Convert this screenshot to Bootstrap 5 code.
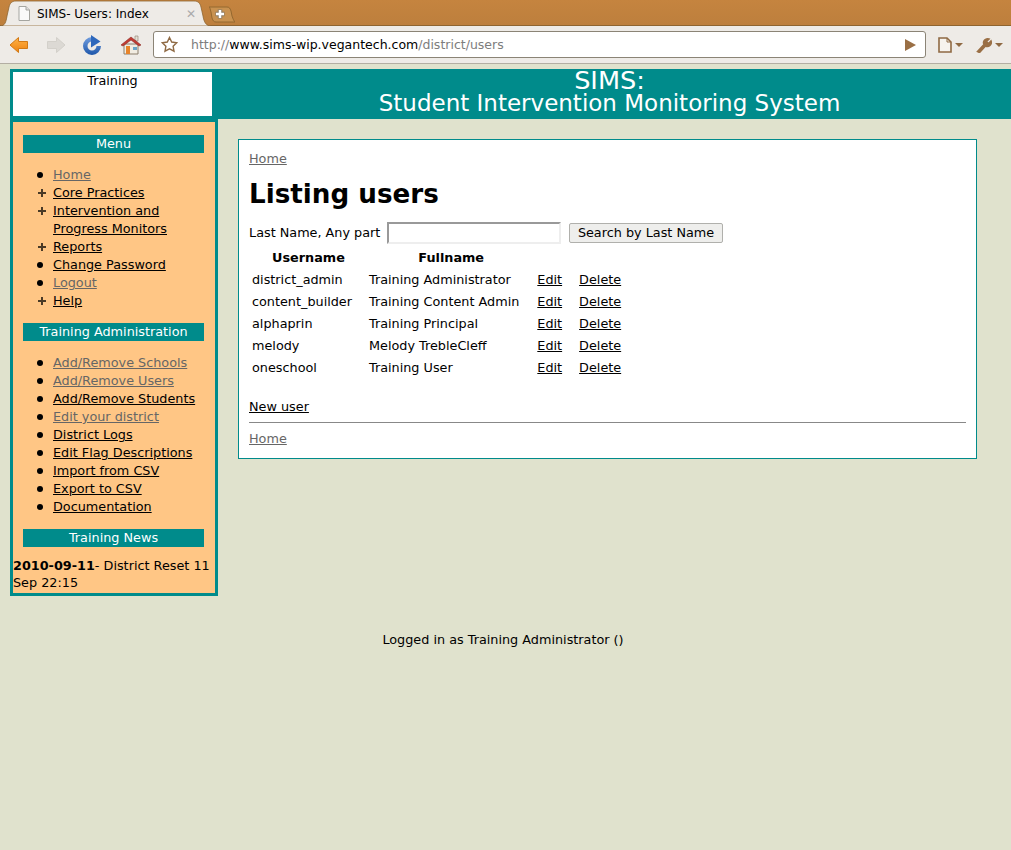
<!DOCTYPE html>
<html lang="en">
<head>
  <meta charset="UTF-8">
  <title>SIMS- Users: Index</title>
  <link href="https://cdn.jsdelivr.net/npm/bootstrap@5.3.0/dist/css/bootstrap.min.css" rel="stylesheet">
  <style>
    body { background-color: #e0e2cd; color: #000; font-family: "DejaVu Sans", sans-serif; font-size: 12.8px; line-height: 18px; }
    a { color: #000; }
    a.seen { color: #666; }

    /* browser chrome */
    .tabstrip { height: 26px; background: linear-gradient(#c5843f, #bd7f3d); border-bottom: 1px solid #8e6430; }
    .tabshape { position: relative; width: 212px; height: 26px; font-size: 12px; padding: 1px 16px 0 18px; }
    .tabshape > svg.tabbg { position: absolute; left: 0; top: 0; }
    .tabshape > svg, .tabshape > span { position: relative; }
    .tabicon { margin-right: 7px; }
    .tabx { color: #aaa; font-size: 12px; }
    .newtab { position: relative; width: 28px; height: 18px; margin: 6px 0 0 -5px; }
    .newtab svg { display: block; }
    .toolbar { height: 38px; background: #eeebe7; border-bottom: 1px solid #b3aea3; padding-left: 9px; }
    .btnslot { width: 37px; flex: none; }
    .homeslot { width: 33px; }
    .urlbar { width: 773px; flex: none; height: 27px; background: #fff; border: 1px solid #8b8476; border-radius: 3px; padding: 0 9px 0 7px; font-size: 12.5px; color: #7d7d7d; }
    .urlbar b { font-weight: normal; color: #000; }
    .urltext { margin-left: 13px; }
    .drop { width: 0; height: 0; border-left: 4px solid transparent; border-right: 4px solid transparent; border-top: 4px solid #8f6a44; }
    .menuicons { margin-left: 12px; }
    .pagedrop { margin: 0 13px 0 3px; }
    .wrenchdrop { margin-left: 3px; }

    /* page */
    .pagewrap { padding: 5px 0 0 10px; }
    .headbar { background: #008b8b; height: 50px; padding: 3px 0 3px 3px; color: #fff; }
    .logobox { width: 199px; height: 44px; background: #fff; color: #000; text-align: center; line-height: 17px; }
    .sitename { font-size: 23px; line-height: 24px; margin: -5px 4px 0 0; }
    .sitename span { display: block; }
    .sitename .toptitle { font-size: 25.6px; line-height: 22px; margin-top: 2px; }
    .sidepane { width: 208px; height: 477px; border: 3px solid #008b8b; background: #ffc685; flex: none; padding-top: 13px; }
    .sidehead { background: #008b8b; color: #fff; text-align: center; margin: 0 11px 0 10px; height: 18px; line-height: 18px; }
    .sidelist { margin: 13px 0 13px; padding-left: 40px; list-style: none; }
    .sidelist li { position: relative; }
    .sidelist li::before { content: ""; position: absolute; left: -16px; top: 6px; width: 6px; height: 6px; border-radius: 50%; background: #000; }
    .sidelist li.more::before { left: -15px; top: 5px; width: 8px; height: 8px; border-radius: 0; background: linear-gradient(#4a3a26, #4a3a26) center / 8px 2px no-repeat, linear-gradient(#4a3a26, #4a3a26) center / 2px 8px no-repeat; }
    .newsline { margin: 10px 0 0; line-height: 17px; }
    .mainbox { width: 739px; height: 320px; background: #fff; border: 1px solid #008b8b; margin: 20px 0 0 20px; padding: 10px; }
    .mainbox h1 { font-size: 26.2px; font-weight: bold; line-height: 30px; margin: 11px 0 12px; }
    .searchrow { height: 24px; }
    .searchbox { width: 174px; height: 22px; border: 2px solid #eee; border-top-color: #999; border-left-color: #999; margin: 0 8px 0 7px; padding: 0 2px; }
    .searchbtn { height: 20px; padding: 0 7.5px 1px; background: #eeeeec; border: 1px solid #b0b0ac; border-radius: 2px; font-size: 12.8px; line-height: 16px; color: #000; }
    .usertbl { border-collapse: separate; border-spacing: 2px; margin-top: 1px; }
    .usertbl th { text-align: center; padding: 1px; }
    .usertbl td { padding: 1px 14px 1px 1px; height: 20px; }
    .usertbl td:nth-child(2) { padding-right: 15px; }
    .newlink { margin: 18px 0 6px; }
    .mainbox hr { margin: 0 0 7px; border: 0; border-top: 1px solid #888; opacity: 1; }
    .footline { text-align: center; margin-top: 35px; width: 986px; }
  </style>
</head>
<body>
  <div class="tabstrip d-flex">
    <div class="tabshape d-flex align-items-center">
      <svg class="tabbg" width="212" height="26" viewBox="0 0 212 26"><path d="M0 26c5 0 6-4 7-10l2-9c1-4 3-6 7-6h178c4 0 6 2 7 6l2 9c1 6 3 10 8 10z" fill="#eeebe7" stroke="#8e6430" stroke-width=".8"/></svg>
      <svg class="tabicon" width="12" height="15" viewBox="0 0 12 15"><path d="M1 .5h7l3.500 3.500v10.500h-10.500z" fill="#fafafa" stroke="#a5a5a0"/><path d="M8 .5v3.500h3.500" fill="#ddd" stroke="#a5a5a0"/></svg>
      <span class="flex-grow-1">SIMS- Users: Index</span>
      <span class="tabx">✕</span>
    </div>
    <div class="newtab">
      <svg width="28" height="18" viewBox="0 0 28 18"><path d="M2 1h18c2 0 3 1 4 4l1 5c1 3 2 5 3 6h-19c-2 0-3-1-4-4l-1-6c-1-3-1-5-2-5z" fill="#c99250" stroke="#94682f" stroke-width="1"/><path d="M13 3.500v9M8.500 8h9" stroke="#8a7a62" stroke-width="4.500"/><path d="M13 4v8M9 8h8" stroke="#fff" stroke-width="2.500"/></svg>
    </div>
  </div>
  <div class="toolbar d-flex align-items-center">
    <div class="btnslot">
      <svg width="20" height="18" viewBox="0 0 20 18"><defs><linearGradient id="backfill" x1="0" y1="0" x2="0" y2="1"><stop offset="0" stop-color="#ffb347"/><stop offset="1" stop-color="#ee8210"/></linearGradient></defs><path d="M1 9l8.500-7.500v4h9v7h-9v4z" fill="url(#backfill)" stroke="#d27a16"/></svg>
    </div>
    <div class="btnslot">
      <svg width="20" height="18" viewBox="0 0 20 18"><path d="M19 9l-8.500-7.500v4h-9v7h9v4z" fill="#dcd9d4" stroke="#d3d0ca"/></svg>
    </div>
    <div class="btnslot">
      <svg width="18" height="20" viewBox="0 0 18 20"><defs><linearGradient id="reloadfill" gradientUnits="userSpaceOnUse" x1="0" y1="0" x2="0" y2="20"><stop offset="0" stop-color="#7aa5e4"/><stop offset="1" stop-color="#1d56aa"/></linearGradient></defs><path d="M9 4.250A6.750 6.750 0 1 0 15.750 11" fill="none" stroke="url(#reloadfill)" stroke-width="4.500"/><path d="M8 0l9.500 6.500-9.500 6z" fill="#2e68bc"/></svg>
    </div>
    <div class="btnslot homeslot">
      <svg width="22" height="22" viewBox="0 0 22 22"><path d="M4 10h14v10h-14z" fill="#f1ece2" stroke="#8a7e6c"/><path d="M15 2h3v5h-3z" fill="#e4dfd4" stroke="#8a7e6c" stroke-width=".6"/><path d="M1 11l10-8 10 8-2 1-8-6-8 6z" fill="#c23a32" stroke="#8a2a24" stroke-width=".6"/><path d="M6 12h4v8h-4z" fill="#e8842a"/><path d="M13 13h4v3h-4z" fill="#6aa4c8"/></svg>
    </div>
    <div class="urlbar d-flex align-items-center">
      <svg width="17" height="17" viewBox="0 0 17 17"><path d="M8.500 1.500l2.200 4.500 5 .7-3.600 3.500.9 5-4.500-2.400-4.500 2.400.9-5-3.600-3.500 5-.7z" fill="#fff" stroke="#8f6a44" stroke-width="1.400"/></svg>
      <span class="urltext flex-grow-1">http://<b>www.sims-wip.vegantech.com</b>/district/users</span>
      <svg width="11" height="12" viewBox="0 0 11 12"><path d="M0 0l11 6-11 6z" fill="#9a6f45"/></svg>
    </div>
    <div class="menuicons d-flex align-items-center">
      <svg width="14" height="16" viewBox="0 0 14 16"><path d="M1 1h8l4 4v10h-12z" fill="#f6f3ee" stroke="#8f6a44" stroke-width="1.600"/><path d="M9 1v4h4" fill="none" stroke="#8f6a44"/></svg>
      <span class="drop pagedrop"></span>
      <svg width="16" height="16" viewBox="0 0 16 16"><path d="M1.500 14.500l6.500-7a4 4 0 0 1 5-5.500l-2.500 2.500 2 2 2.500-2.500a4 4 0 0 1-5.500 5l-6 6.500z" fill="#9a6f45" stroke="#9a6f45" stroke-width="1.600"/></svg>
      <span class="drop wrenchdrop"></span>
    </div>
  </div>

  <div class="pagewrap">
    <div class="headbar d-flex">
      <div class="logobox">Training</div>
      <div class="sitename flex-grow-1 text-center"><span class="toptitle">SIMS:</span><span>Student Intervention Monitoring System</span></div>
    </div>
    <div class="d-flex align-items-start">
      <div class="sidepane">
        <div class="sidehead">Menu</div>
        <ul class="sidelist">
          <li><a class="seen" href="#">Home</a></li>
          <li class="more"><a href="#">Core Practices</a></li>
          <li class="more"><a href="#">Intervention and Progress Monitors</a></li>
          <li class="more"><a href="#">Reports</a></li>
          <li><a href="#">Change Password</a></li>
          <li><a class="seen" href="#">Logout</a></li>
          <li class="more"><a href="#">Help</a></li>
        </ul>
        <div class="sidehead">Training Administration</div>
        <ul class="sidelist">
          <li><a class="seen" href="#">Add/Remove Schools</a></li>
          <li><a class="seen" href="#">Add/Remove Users</a></li>
          <li><a href="#">Add/Remove Students</a></li>
          <li><a class="seen" href="#">Edit your district</a></li>
          <li><a href="#">District Logs</a></li>
          <li><a href="#">Edit Flag Descriptions</a></li>
          <li><a href="#">Import from CSV</a></li>
          <li><a href="#">Export to CSV</a></li>
          <li><a href="#">Documentation</a></li>
        </ul>
        <div class="sidehead">Training News</div>
        <p class="newsline"><b>2010-09-11</b>- District Reset 11 Sep 22:15</p>
      </div>
      <div class="mainbox">
        <a class="seen" href="#">Home</a>
        <h1>Listing users</h1>
        <div class="searchrow d-flex align-items-center">
          <span>Last Name, Any part</span>
          <input class="searchbox" type="text">
          <button class="searchbtn" type="button">Search by Last Name</button>
        </div>
        <table class="usertbl">
          <tr><th>Username</th><th>Fullname</th><th></th><th></th></tr>
          <tr><td>district_admin</td><td>Training Administrator</td><td><a href="#">Edit</a></td><td><a href="#">Delete</a></td></tr>
          <tr><td>content_builder</td><td>Training Content Admin</td><td><a href="#">Edit</a></td><td><a href="#">Delete</a></td></tr>
          <tr><td>alphaprin</td><td>Training Principal</td><td><a href="#">Edit</a></td><td><a href="#">Delete</a></td></tr>
          <tr><td>melody</td><td>Melody TrebleCleff</td><td><a href="#">Edit</a></td><td><a href="#">Delete</a></td></tr>
          <tr><td>oneschool</td><td>Training User</td><td><a href="#">Edit</a></td><td><a href="#">Delete</a></td></tr>
        </table>
        <p class="newlink"><a href="#">New user</a></p>
        <hr>
        <a class="seen" href="#">Home</a>
      </div>
    </div>
    <p class="footline">Logged in as Training Administrator ()</p>
  </div>
  <script src="https://cdn.jsdelivr.net/npm/bootstrap@5.3.0/dist/js/bootstrap.bundle.min.js"></script>
</body>
</html>
